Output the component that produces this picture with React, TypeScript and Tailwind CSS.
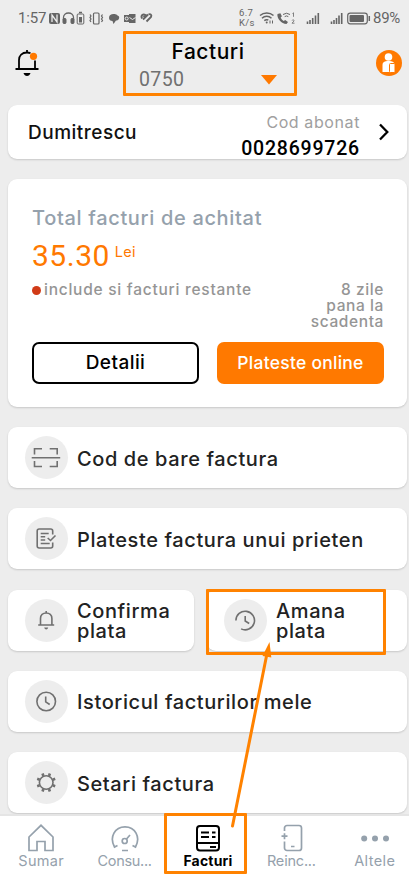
import React from 'react';

const CARD = 'bg-white rounded-[9px] shadow-[0_1px_2px_rgba(0,0,0,0.16)]';

const StatusBar = () => (
  <div className="h-[36px] pl-[18px] pr-[8px] flex items-center text-[#656565] font-['Roboto',sans-serif]">
    <span className="w-[27px] text-[15px] leading-[18px] whitespace-nowrap tracking-[-0.2px]">1:57</span>
    <svg className="ml-[3px] shrink-0" width="107" height="16" viewBox="48 10 107 16" fill="none" stroke="#656565">
      {/* nfc */}
      <rect x="49" y="13" width="11" height="11" rx="2" fill="#656565" stroke="none" />
      <path d="M52 22v-7l5 7v-7.500" stroke="#ededed" strokeWidth="1.300" />
      {/* headphones */}
      <path d="M63.500 20v-2.500a5 4.500 0 0 1 10 0V20" strokeWidth="1.300" />
      <rect x="63" y="18.500" width="3" height="5" rx="1" fill="#656565" />
      <rect x="71" y="18.500" width="3" height="5" rx="1" fill="#656565" />
      {/* battery saver */}
      <path d="M79 12.500h3" strokeWidth="1.500" />
      <rect x="77.200" y="14" width="6.600" height="10" rx="1" />
      <path d="M79 17h3v5.500h-3z" fill="#656565" stroke="none" />
      {/* vibrate */}
      <rect x="93.500" y="13" width="5.500" height="11" rx="1" strokeWidth="1.200" />
      <path d="M90 14.500l1 1.500-1 1.500 1 1.500-1 1.500 1 1.500M102.500 14.500l-1 1.500 1 1.500-1 1.500 1 1.500-1 1.500" strokeWidth="1.200" />
      {/* chat */}
      <path d="M109 18c0-3 2-4 4.500-4 2 0 3.500.5 4 1.500 1.500.3 2 1.500 1.500 3s-1.500 2-3 2l-2.500 3.500-1-3c-2 0-3.500-1-3.500-3z" fill="#656565" stroke="none" />
      {/* mail */}
      <path d="M124 15h5v-1h6.500v9H129v-1h-5z" fill="#656565" stroke="none" />
      <circle cx="126.700" cy="18.500" r="1.500" stroke="#ededed" />
      <path d="M129.500 17.500l3 2 3-2" stroke="#ededed" />
      {/* health */}
      <path d="M142 18.500c-1.500-3 1-5 3.500-3.500l-2 2.500M143 19.500l5-5M146.500 21.500l4.500-4.500c1-2-.5-3.500-2.500-2.500" strokeWidth="1.900" />
    </svg>
    <div className="ml-[84px] w-[17px] shrink-0 text-[9.500px] leading-[10px] tracking-[0.300px]">
      <div>6.7</div>
      <div>K/s</div>
    </div>
    <svg className="shrink-0 ml-[2px]" width="114" height="16" viewBox="258 10 114 16" fill="none" stroke="#656565">
      {/* wifi */}
      <path d="M260 15.500a10 10 0 0 1 13.500 0M262 18.200a7 7 0 0 1 9.500 0M264.300 20.600a4 4 0 0 1 4 -.6" strokeWidth="1.500" />
      <circle cx="266.700" cy="22.500" r="1" fill="#656565" stroke="none" />
      <path d="M270 23.500v-3M272.500 20.500v3" />
      {/* wifi call */}
      <path d="M277.500 14c-1 4 4 10 9 10l1.500-2-2.800-2-1.500 1c-1.500-.8-2.500-2-3-3.500l1.200-1.200-1.500-3z" fill="#656565" stroke="none" />
      <path d="M283 14.500a6 6 0 0 1 7 0M284.700 16.600a3 3 0 0 1 3.600 0" />
      <path d="M292.500 13.500l1-.7v4M292 20.500c.5-1 2.500-.7 2 .5l-2 2.200h2.500" strokeWidth=".8" />
      {/* signal bars */}
      <path d="M307.500 24v-2.500M310 24v-4M312.700 24v-6M315.500 24v-8.500M318.300 24v-11" strokeWidth="1.600" />
      <path d="M331.500 24v-2.500M334 24v-4M336.500 24v-6M339 24v-8.500M341.700 24v-11" strokeWidth="1.600" />
      {/* battery */}
      <rect x="347.700" y="13.200" width="19.600" height="10.600" rx="2.500" strokeWidth="1.200" />
      <rect x="349.500" y="15" width="14.500" height="7" rx="1" fill="#656565" stroke="none" />
      <path d="M369.300 16v5" strokeWidth="1.500" />
    </svg>
    <span className="ml-[1px] text-[15px] leading-[18px] tracking-[-0.3px]">89%</span>
  </div>
);

const Header = () => (
  <header className="h-[69px] flex justify-between pl-[14px] pr-[7px]">
    <svg className="mt-[12px]" width="26" height="30" viewBox="14 48 26 30" fill="none" stroke="#000" strokeWidth="1.800">
      <path d="M15.500 69h23M19 69V60c0-4.500 3-7.500 8-7.500 1.500 0 2.500.2 3.500.7M35 60.500V69M27 50v2.500" />
      <path d="M23.500 73h7c-1 4-6 4-7 0z" fill="#000" stroke="none" />
      <circle cx="33.500" cy="56.300" r="3.600" fill="#ff7900" stroke="none" />
    </svg>
    <div className="w-[140px] ml-[2px]">
      <h1 className="mt-[4px] mr-[2px] text-center text-[21px] leading-[24px] font-medium tracking-[0.500px] text-black">Facturi</h1>
      <div className="flex items-center justify-between mt-[4px]">
        <span className="font-['Roboto',sans-serif] text-[19.500px] leading-[24px] tracking-[0.400px] text-[#707070]">0750</span>
        <svg className="mr-[2px]" width="16" height="10" viewBox="0 0 16 10">
          <path d="M0 0h16L8 9.500z" fill="#ff7900" />
        </svg>
      </div>
    </div>
    <svg className="mt-[14px]" width="26" height="26" viewBox="0 0 26 26">
      <circle cx="13" cy="13" r="13" fill="#ff7900" />
      <circle cx="12.500" cy="7" r="3.800" fill="#fff" />
      <path d="M6.500 22v-7c0-3 2-4 6-4s6 1 6 4v7z" fill="#fff" />
      <rect x="13.500" y="13.500" width="5.500" height="9" rx="1" fill="#fff" stroke="#ff7900" />
    </svg>
  </header>
);

const SubscriberCard = () => (
  <section className={`${CARD} h-[54px] pl-[20px] flex justify-between`}>
    <span className="mt-[16px] text-[19px] leading-[24px] font-medium tracking-[0.500px] text-[#111]">Dumitrescu</span>
    <div className="flex">
      <div className="text-right mr-[18px] whitespace-nowrap">
        <div className="mt-[7px] text-[16px] leading-[20px] tracking-[0.600px] text-[#a0a0a0]">Cod abonat</div>
        <div className="mt-[5px] font-['Roboto',sans-serif] text-[19.500px] leading-[24px] font-medium tracking-[0.800px] text-black">0028699726</div>
      </div>
      <svg className="mt-[18px] mr-[17px]" width="12" height="18" viewBox="0 0 12 18">
        <path d="M2 1.500l7.300 7.500L2 16.500" fill="none" stroke="#000" strokeWidth="2.300" />
      </svg>
    </div>
  </section>
);

const TotalCard = () => (
  <section className={`${CARD} h-[228px] mt-[20px] pl-[24px] pr-[23px]`}>
    <h2 className="pt-[26px] text-[20px] leading-[26px] font-medium tracking-[0.670px] text-[#95a1ac] whitespace-nowrap">Total facturi de achitat</h2>
    <div className="flex mt-[8px] text-[#ff7900] h-[34px]">
      <span className="font-['Roboto',sans-serif] text-[30px] leading-[34px] tracking-[0.500px]">35.30</span>
      <span className="text-[14.500px] leading-[18px] mt-[4px] ml-[5px] tracking-[0.200px]">Lei</span>
    </div>
    <div className="flex justify-between mt-[9px] h-[50px] text-[15.500px] leading-[16px] font-medium tracking-[0.750px] text-[#959595]">
      <div className="flex items-start whitespace-nowrap">
        <span className="w-[9px] h-[9px] mt-[4px] mr-[3px] rounded-full bg-[#d13b17]" />
        <span>include si facturi restante</span>
      </div>
      <div className="w-[80px] text-right tracking-[0.600px]">8 zile<br />pana la<br />scadenta</div>
    </div>
    <div className="flex justify-between mt-[10px]">
      <button className="w-[167px] h-[42px] pt-[1px] rounded-[7px] border-2 border-black text-[19px] font-medium tracking-[0.450px] text-black">Detalii</button>
      <button className="w-[167px] h-[42px] pt-px rounded-[7px] bg-[#ff7900] text-[17.500px] font-medium tracking-[0.250px] text-white whitespace-nowrap">Plateste online</button>
    </div>
  </section>
);

const icons = {
  barcode: (
    <path d="M.5 15.300h28.500M3.300 12V6.200h7.500M18.500 6.200H26V12M3.300 18.500V24h7.500M18.500 24H26v-5.500" />
  ),
  bill: (
    <path d="M21.500 11V7.500a2 2 0 0 0-2-2H8a2 2 0 0 0-2 2v15a2 2 0 0 0 2 2h11.500a2 2 0 0 0 2-2V19M9.500 10h8M9.500 13.300h4.500M9.500 16.500h4.500M9.500 20h9M16.500 14.500l2.800 2.500 5-5" />
  ),
  bell: (
    <>
      <path d="M7 19.500h16M9.300 19.500v-6.500c0-3.500 2.500-5.500 5.700-5.500s5.700 2 5.700 5.500v6.500M15 5.500v2" />
      <path d="M13 22h4c-.5 2.500-3.500 2.500-4 0z" fill="#707070" stroke="none" />
    </>
  ),
  postpone: (
    <path d="M5.700 15a9.300 9.300 0 1 1 5.200 8.400M15 10.500v5l4 2.500" />
  ),
  clock: (
    <>
      <circle cx="15" cy="15" r="9.300" />
      <path d="M14.500 10v5.300l4 2.700" />
    </>
  ),
  gear: (
    <>
      <circle cx="15" cy="15" r="6.800" />
      <path d="M12.200 8.500L11.300 6M17.800 8.500l.9-2.500M21.500 12.200l2.500-.9M21.500 17.800l2.500.9M17.800 21.500l.9 2.500M12.200 21.500l-.9 2.500M8.500 17.800L6 18.700M8.500 12.200L6 11.300" strokeWidth="2.600" />
    </>
  ),
};

interface ActionProps {
  icon: keyof typeof icons;
  label: React.ReactNode;
  className?: string;
}

const ActionCard: React.FC<ActionProps> = ({ icon, label, className = '' }) => (
  <button className={`${CARD} h-[61px] pl-[17px] flex items-center text-left ${className}`}>
    <span className="w-[43px] h-[43px] shrink-0 rounded-full bg-[#ededed] flex items-center justify-center">
      <svg width="31" height="31" viewBox="-0.2 -0.5 31 31" fill="none" stroke="#707070" strokeWidth="1.600">
        {icons[icon]}
      </svg>
    </span>
    <span className="ml-[9px] pt-[2px] text-[20px] leading-[20px] font-medium tracking-[0.600px] text-[#222] whitespace-nowrap">{label}</span>
  </button>
);

const tabs = [
  {
    label: 'Sumar',
    text: 'text-[14.500px] tracking-[0.300px]',
    icon: <path d="M2 13L14 1.300 26 13v13.500h-8v-9h-8v9H2z" />,
  },
  {
    label: 'Consu...',
    text: 'text-[14.500px] tracking-[-0.300px]',
    icon: (
      <>
        <path d="M6.500 21.500L3.500 23C-2 13 4 2.800 14 2.800s16 10.200 10.500 20.200l-3-1.500M11 26.500h6M15.500 15l3.500-4" />
        <circle cx="13.700" cy="17" r="2.500" />
      </>
    ),
  },
  {
    label: 'Facturi',
    text: 'text-[14px] font-bold tracking-[0.200px]',
    active: true,
    icon: (
      <>
        <rect x="3" y="2" width="22" height="24.500" rx="3" strokeWidth="2" />
        <path d="M3 19h22M7 8.500h8M7 13h8M18 8.500h3.500M18 13h3.500M16 23h6" strokeWidth="2" />
      </>
    ),
  },
  {
    label: 'Reinc...',
    text: 'text-[14.500px] tracking-[-0.200px]',
    icon: (
      <path d="M7.500 7V4A2.500 2.500 0 0 1 10 1.500h12A2.500 2.500 0 0 1 24.500 4v20a2.500 2.500 0 0 1-2.500 2.500H10A2.500 2.500 0 0 1 7.500 24v-6.500M4.500 12.200h6M7.500 9.200v6M14 22.500h3.500" />
    ),
  },
  {
    label: 'Altele',
    text: 'text-[14.500px] tracking-[0.400px]',
    icon: (
      <g fill="#95a1ac" stroke="none">
        <circle cx="3.200" cy="14.500" r="3" />
        <circle cx="14" cy="14.500" r="3" />
        <circle cx="25" cy="14.500" r="3" />
      </g>
    ),
  },
];

const TabBar = () => (
  <nav className="h-[67px] shrink-0 bg-white border-t-2 border-[#e5e5e5] relative overflow-hidden">
    <div className="w-[417px] ml-[-0.5px] grid grid-cols-5 pt-[8px]">
      {tabs.map((tab) => (
        <button key={tab.label} className={`flex flex-col items-center ${tab.active ? 'text-black' : 'text-[#95a1ac]'}`}>
          <svg width="28" height="28" viewBox="0 0 28 28" fill="none" stroke="currentColor" strokeWidth="1.700">
            {tab.icon}
          </svg>
          <span className={`leading-[18px] ${tab.text}`}>{tab.label}</span>
        </button>
      ))}
    </div>
  </nav>
);

// Highlight boxes and the arrow drawn on top of the screen
const Annotations = () => (
  <div className="absolute inset-0 pointer-events-none">
    <div className="absolute left-[123px] top-[31px] w-[174px] h-[65px] border-[3px] border-[#ff8200] rounded-[1px]" />
    <div className="absolute left-[206px] top-[589px] w-[180px] h-[66px] border-[3px] border-[#ff8200] rounded-[1px]" />
    <div className="absolute left-[164px] top-[813px] w-[83px] h-[61px] border-[3px] border-[#ff8200] rounded-[1px]" />
    <svg className="absolute inset-0" width="409" height="881" viewBox="0 0 409 881">
      <path d="M232.500 826L266.700 655" stroke="#ff8200" strokeWidth="3" strokeLinecap="round" />
      <path d="M269.500 642L262.500 656L271.300 657.500z" fill="#ff8200" />
    </svg>
  </div>
);

const App: React.FC = () => {
  return (
    <div className="relative w-[409px] h-[881px] overflow-hidden flex flex-col bg-[#ededed] font-['Inter',sans-serif]">
      <StatusBar />
      <Header />
      <main className="flex-1 min-h-0 overflow-hidden pl-[8px] pr-[2px]">
        <SubscriberCard />
        <TotalCard />
        <div className="mt-[20px] flex flex-col gap-[20.300px]">
          <ActionCard icon="barcode" label="Cod de bare factura" />
          <ActionCard icon="bill" label="Plateste factura unui prieten" />
          <div className="flex justify-between">
            <ActionCard icon="bell" className="w-[186px]" label={<>Confirma<br />plata</>} />
            <ActionCard icon="postpone" className="w-[200px]" label={<>Amana<br />plata</>} />
          </div>
          <ActionCard icon="clock" label="Istoricul facturilor mele" />
          <ActionCard icon="gear" label="Setari factura" />
        </div>
      </main>
      <TabBar />
      <Annotations />
    </div>
  );
};

export default App;
